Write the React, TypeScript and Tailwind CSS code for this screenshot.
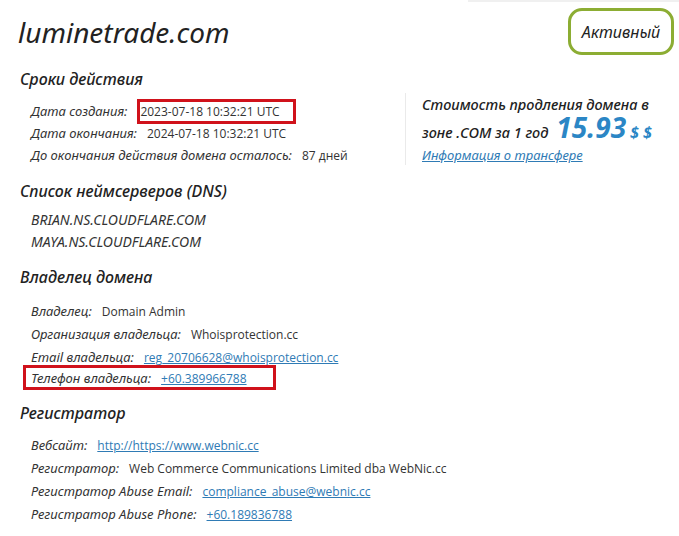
import React from "react";

const lab = "italic text-[13px] text-[#333] [font-family:'Noto_Sans',sans-serif]";
const val = "text-[12px] text-[#333] [font-family:'Open_Sans',sans-serif]";
const link = "text-[12px] text-[#2f7bb5] underline [font-family:'Open_Sans',sans-serif]";
const head = "italic font-medium text-[16px] text-[#222] [font-family:'Noto_Sans',sans-serif] leading-[22px]";

function Row({ label, children }: { label: string; children: React.ReactNode }) {
  return (
    <div className="flex items-baseline h-[23px] pt-[2px] pl-[31px]">
      <span className={lab}>{label}</span>
      <span className="ml-[10px]">{children}</span>
    </div>
  );
}

export default function App() {
  return (
    <div className="w-[679px] h-[536px] bg-white relative overflow-hidden">
      <div className="absolute top-0 right-0 w-[211px] h-[2px] bg-[#f0f0f0]" />
      <div className="flex justify-between items-start pt-[8px] pr-[5px]">
        <div className="pl-[18px] pt-[7px] italic text-[28px] leading-[34px] text-[#222] [font-family:'Noto_Sans',sans-serif]">
          luminetrade.com
        </div>
        <div className="w-[106px] h-[47px] rounded-[14px] border-[3px] border-[#8cad33] flex items-center justify-center italic text-[16px] text-[#222] [font-family:'Noto_Sans',sans-serif]">
          Активный
        </div>
      </div>

      <div className="flex mt-[13px]">
        <div className="w-[405px]">
          <div className={`${head} pl-[20px]`}>Сроки действия</div>
          <div className="mt-[9px]">
            <div className="flex items-baseline h-[18px] pl-[31px]">
              <span className={lab}>Дата создания:</span>
              <span className={`${val} ml-[10px] border-[3px] border-[#d0121b] pl-[0px] pr-[13px] leading-[19px]`}>2023-07-18 10:32:21 UTC</span>
            </div>
            <div className="flex items-baseline h-[23px] pt-[7px] pl-[31px]">
              <span className={lab}>Дата окончания:</span>
              <span className={`${val} ml-[10px]`}>2024-07-18 10:32:21 UTC</span>
            </div>
            <div className="flex items-baseline h-[23px] pt-[6px] pl-[31px]">
              <span className={lab}>До окончания действия домена осталось:</span>
              <span className={`${val} ml-[10px]`}>87 дней</span>
            </div>
          </div>
        </div>
        <div className="mt-[25px] h-[72px] border-l border-[#eaeaea] pl-[16px] italic [font-family:'Noto_Sans',sans-serif] text-[#222]">
          <div className="text-[14.5px] leading-[22px] font-medium">Стоимость продления домена в</div>
          <div className="flex items-baseline text-[14.5px] leading-[26px] font-medium">
            <span>зоне .COM за 1 год</span>
            <span className="ml-[8px] text-[28px] font-bold text-[#2b86c5] leading-[24px]">15.93</span>
            <span className="ml-[4px] text-[16px] font-bold text-[#2b86c5]">$ $</span>
          </div>
          <div className="text-[13px] text-[#2f7bb5] underline leading-[20px]">Информация о трансфере</div>
        </div>
      </div>

      <div className={`${head} pl-[20px] mt-[15px]`}>Список неймсерверов (DNS)</div>
      <div className="mt-[6px]">
        <div className={`${lab} text-[14px] pl-[31px] h-[22px] flex items-center`}>BRIAN.NS.CLOUDFLARE.COM</div>
        <div className={`${lab} text-[14px] pl-[31px] h-[22px] flex items-center`}>MAYA.NS.CLOUDFLARE.COM</div>
      </div>

      <div className={`${head} pl-[20px] mt-[14px]`}>Владелец домена</div>
      <div className="mt-[8px]">
        <Row label="Владелец:"><span className={val}>Domain Admin</span></Row>
        <Row label="Организация владельца:"><span className={val}>Whoisprotection.cc</span></Row>
        <Row label="Email владельца:"><span className={link}>reg_20706628@whoisprotection.cc</span></Row>
        <div className="ml-[23px] w-[253px] h-[25px] border-[3px] border-[#d0121b] flex items-baseline pt-[1px] pl-[5px]">
          <span className={lab}>Телефон владельца:</span>
          <span className={`${link} ml-[10px]`}>+60.389966788</span>
        </div>
      </div>

      <div className={`${head} pl-[20px] mt-[12px]`}>Регистратор</div>
      <div className="mt-[6px]">
        <Row label="Вебсайт:"><span className={link}>http://https://www.webnic.cc</span></Row>
        <Row label="Регистратор:"><span className={val}>Web Commerce Communications Limited dba WebNic.cc</span></Row>
        <Row label="Регистратор Abuse Email:"><span className={link}>compliance_abuse@webnic.cc</span></Row>
        <Row label="Регистратор Abuse Phone:"><span className={link}>+60.189836788</span></Row>
      </div>
    </div>
  );
}
